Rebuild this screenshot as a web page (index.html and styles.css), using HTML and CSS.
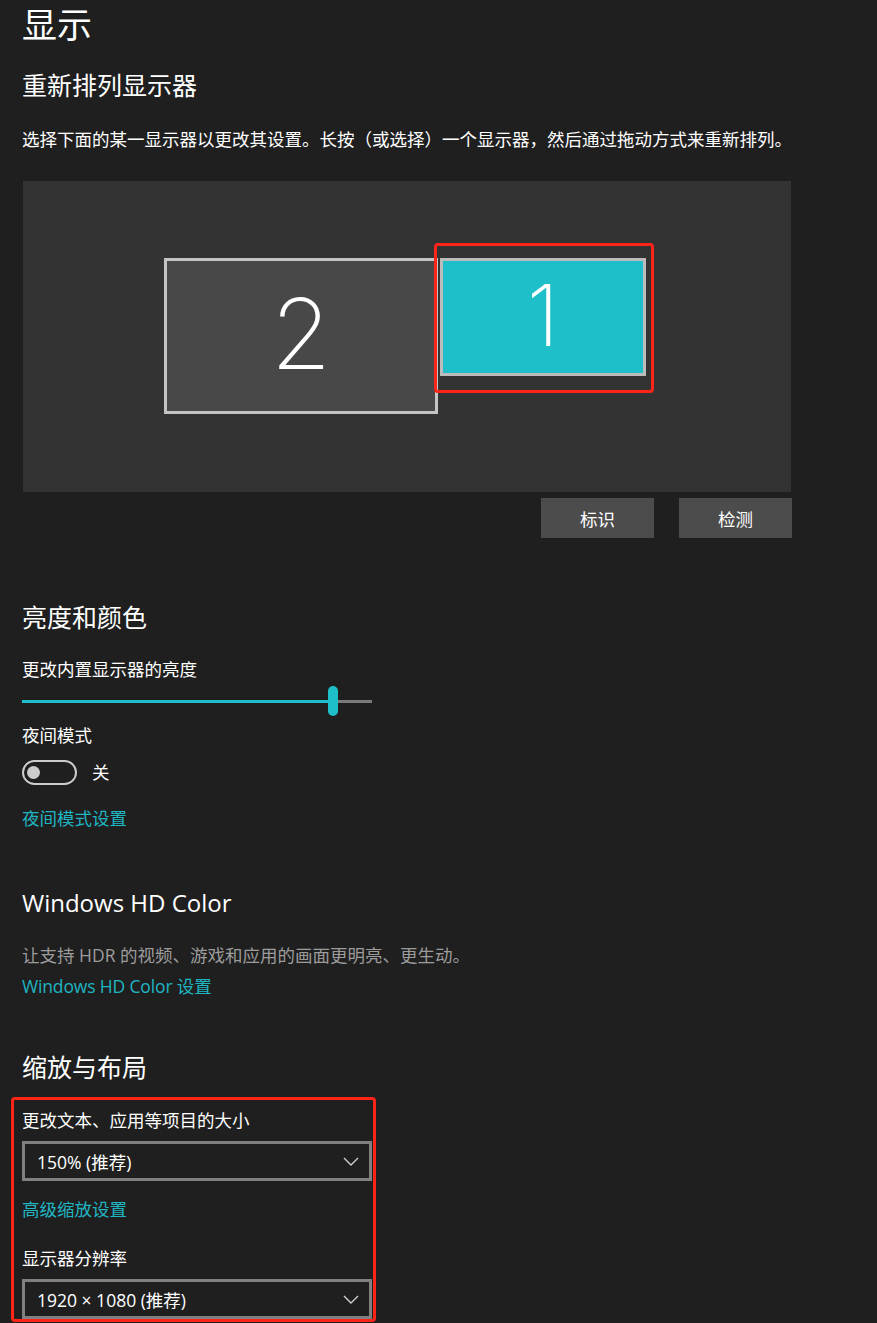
FILE: index.html
```html
<!DOCTYPE html>
<html lang="zh-CN">
<head>
<meta charset="utf-8">
<title>显示</title>
<link rel="stylesheet" href="styles.css">
</head>
<body>
<main class="page">
  <h1 class="title">显示</h1>

  <h2 class="heading h-arrange">重新排列显示器</h2>
  <p class="text desc">选择下面的某一显示器以更改其设置。长按（或选择）一个显示器，然后通过拖动方式来重新排列。</p>

  <div class="canvas">
    <div class="monitor monitor-2"><span class="num">2</span></div>
    <div class="monitor monitor-1 selected"><span class="num">1</span></div>
    <div class="highlight hl-monitor"></div>
  </div>
  <div class="canvas-actions">
    <button class="btn">标识</button>
    <button class="btn">检测</button>
  </div>

  <h2 class="heading h-bright">亮度和颜色</h2>
  <p class="text label l-bright">更改内置显示器的亮度</p>
  <div class="slider">
    <div class="track-fill"></div>
    <div class="thumb"></div>
    <div class="track-rest"></div>
  </div>
  <p class="text label l-night">夜间模式</p>
  <div class="toggle-row">
    <div class="toggle"><div class="knob"></div></div>
    <span class="text toggle-text">关</span>
  </div>
  <a class="text link l-nightset">夜间模式设置</a>

  <h2 class="heading h-hd">Windows HD Color</h2>
  <p class="text muted l-hddesc">让支持 HDR 的视频、游戏和应用的画面更明亮、更生动。</p>
  <a class="text link l-hdset">Windows HD Color 设置</a>

  <h2 class="heading h-scale">缩放与布局</h2>
  <div class="scale-group">
    <p class="text label">更改文本、应用等项目的大小</p>
    <div class="dropdown d-scale">
      <span class="dd-value">150% (推荐)</span>
      <svg class="chev" width="16" height="9" viewBox="0 0 16 9"><polyline points="1,1 8,8 15,1" fill="none" stroke="#cfcfcf" stroke-width="1.4"/></svg>
    </div>
    <a class="text link l-adv">高级缩放设置</a>
    <p class="text label l-res">显示器分辨率</p>
    <div class="dropdown d-res">
      <span class="dd-value">1920 × 1080 (推荐)</span>
      <svg class="chev" width="16" height="9" viewBox="0 0 16 9"><polyline points="1,1 8,8 15,1" fill="none" stroke="#cfcfcf" stroke-width="1.4"/></svg>
    </div>
    <div class="highlight hl-group"></div>
  </div>
</main>
</body>
</html>
```

FILE: styles.css
```css
* { box-sizing: border-box; }
html, body {
  margin: 0;
  background: #1f1f1f;
}
body {
  width: 877px;
  height: 1323px;
  overflow: hidden;
  color: #ffffff;
  font-family: "Open Sans", "Noto Sans CJK SC", sans-serif;
}
.page {
  padding: 0 0 0 22px;
  display: flex;
  flex-direction: column;
  align-items: flex-start;
}
.title {
  margin: 0;
  font-size: 35px;
  line-height: 50px;
  font-weight: 400;
}
.heading {
  margin: 0;
  font-size: 25px;
  line-height: 35px;
  font-weight: 400;
}
.text {
  margin: 0;
  font-size: 17.5px;
  line-height: 26px;
}
.h-arrange { margin-top: 18px; }
.desc { margin-top: 23px; white-space: nowrap; }

.canvas {
  position: relative;
  margin-top: 29px;
  margin-left: 1px;
  width: 768px;
  height: 311px;
  background: #333333;
}
.monitor {
  position: absolute;
  border: 3px solid #c4c4c4;
  display: flex;
  align-items: center;
  justify-content: center;
  font-family: "Inter", "Open Sans", sans-serif;
  font-weight: 200;
  line-height: 1;
  color: #ffffff;
}
.monitor-2 {
  left: 141px;
  top: 77px;
  width: 274px;
  height: 156px;
  background: #484848;
  font-size: 98px;
}
.monitor-1 {
  left: 417px;
  top: 77px;
  width: 206px;
  height: 118px;
  background: #1fbfca;
  border-color: #bcbcbc;
  font-size: 85px;
}
.num { display: block; transform: translateY(-2px); }
.highlight {
  position: absolute;
  border: 3.5px solid #ff2418;
  border-radius: 4px;
  pointer-events: none;
}
.hl-monitor {
  left: 411px;
  top: 62px;
  width: 220px;
  height: 150px;
}
.canvas-actions {
  margin-top: 6px;
  width: 770px;
  display: flex;
  justify-content: flex-end;
  gap: 25px;
}
.btn {
  width: 113px;
  height: 40px;
  border: none;
  background: #4c4c4c;
  color: #ffffff;
  font-family: "Open Sans", "Noto Sans CJK SC", sans-serif;
  font-size: 17.5px;
  padding: 0;
}

.h-bright { margin-top: 62px; }
.l-bright { margin-top: 21px; }
.slider {
  margin-top: 4px;
  width: 350px;
  height: 30px;
  display: flex;
  align-items: center;
}
.track-fill {
  flex: 0 0 306px;
  height: 3px;
  background: #1fbfca;
}
.thumb {
  flex: 0 0 10px;
  height: 30px;
  border-radius: 5px;
  background: #1fbfca;
}
.track-rest {
  flex: 1;
  height: 3px;
  background: #7a7a7a;
}
.l-night { margin-top: 6px; }
.toggle-row {
  margin-top: 11px;
  display: flex;
  align-items: center;
  gap: 15px;
}
.toggle {
  width: 55px;
  height: 25px;
  border: 2px solid #cccccc;
  border-radius: 13px;
  display: flex;
  align-items: center;
  padding-left: 3px;
}
.knob {
  width: 13px;
  height: 13px;
  border-radius: 50%;
  background: #cccccc;
}
.link {
  color: #1fb5c3;
  text-decoration: none;
}
.l-nightset { margin-top: 20px; }

.h-hd { margin-top: 54px; font-size: 24px; }
.muted { color: #9c9c9c; }
.l-hddesc { margin-top: 22px; }
.l-hdset { margin-top: 5px; letter-spacing: -0.15px; }

.h-scale { margin-top: 51px; }
.scale-group {
  position: relative;
  margin-top: 22px;
  width: 350px;
  display: flex;
  flex-direction: column;
  align-items: flex-start;
}
.dropdown {
  margin-top: 8px;
  width: 350px;
  height: 40px;
  border: 3px solid #808080;
  display: flex;
  align-items: center;
  justify-content: space-between;
  padding: 0 10px 0 12px;
  font-size: 17.5px;
}
.l-adv { margin-top: 15px; }
.l-res { margin-top: 23px; }
.d-res { margin-top: 8px; }
.hl-group {
  left: -11px;
  top: -10px;
  right: -4px;
  bottom: -3px;
}
```
